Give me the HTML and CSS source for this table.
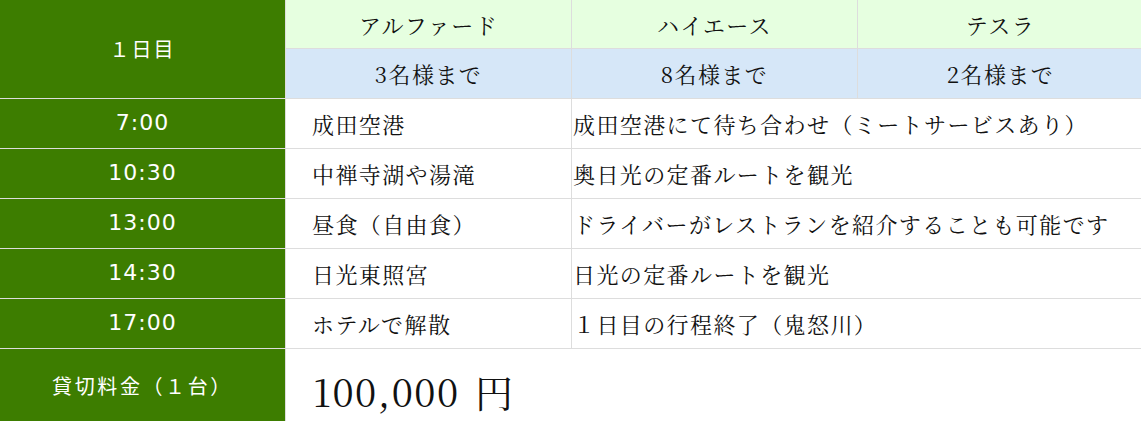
FILE: index.html
```html
<!DOCTYPE html>
<html lang="ja">
<head>
<meta charset="utf-8">
<title>1日目</title>
<link rel="stylesheet" href="styles.css">
</head>
<body>
<div class="plan">
  <div class="day side">１日目</div>
  <div class="car">アルファード</div>
  <div class="car">ハイエース</div>
  <div class="car">テスラ</div>
  <div class="cap">3名様まで</div>
  <div class="cap">8名様まで</div>
  <div class="cap">2名様まで</div>

  <div class="side time">7:00</div>
  <div class="place">成田空港</div>
  <div class="note">成田空港にて待ち合わせ（ミートサービスあり）</div>

  <div class="side time">10:30</div>
  <div class="place">中禅寺湖や湯滝</div>
  <div class="note">奥日光の定番ルートを観光</div>

  <div class="side time">13:00</div>
  <div class="place">昼食（自由食）</div>
  <div class="note">ドライバーがレストランを紹介することも可能です</div>

  <div class="side time">14:30</div>
  <div class="place">日光東照宮</div>
  <div class="note">日光の定番ルートを観光</div>

  <div class="side time">17:00</div>
  <div class="place">ホテルで解散</div>
  <div class="note">１日目の行程終了（鬼怒川）</div>

  <div class="side fee">貸切料金（１台）</div>
  <div class="price">100,000 円</div>
</div>
</body>
</html>
```
FILE: styles.css
```css
html, body {
  margin: 0;
  padding: 0;
  background: #fff;
}
.plan {
  display: grid;
  grid-template-columns: 285px 285px 285px 285px;
  grid-template-rows: 48px 49px 49px 49px 49px 49px 49px 80px;
  gap: 1px;
  background: #dddddd;
  width: 1141px;
  overflow: hidden;
  font-family: "Noto Serif CJK JP", "Liberation Serif", "Noto Sans CJK JP", serif;
  font-size: 22px;
  letter-spacing: 1.4px;
  color: #111;
}
.plan > div {
  display: flex;
  align-items: center;
  background: #fff;
  white-space: nowrap;
}
.side {
  background: #3d7d00 !important;
  color: #fff;
  justify-content: center;
  font-family: "DejaVu Sans", "Noto Sans CJK JP", sans-serif;
  font-size: 20px;
  letter-spacing: 2px;
}
.time {
  font-size: 22px;
  letter-spacing: 1px;
  padding-bottom: 3px;
}
.day {
  grid-row: span 2;
  padding-bottom: 2px;
}
.car {
  background: #e6ffe0 !important;
  justify-content: center;
}
.cap {
  background: #d6e7f8 !important;
  justify-content: center;
}
.place {
  padding-left: 26px;
}
.note {
  grid-column: span 2;
  padding-left: 1px;
}
.fee {
  align-items: flex-start !important;
  padding-top: 22px;
  letter-spacing: 2.6px;
}
.price {
  grid-column: span 3;
  padding-left: 27px;
  font-size: 38px;
  letter-spacing: 1.5px;
  word-spacing: 4px;
  align-items: flex-start !important;
  padding-top: 14px;
}
```
